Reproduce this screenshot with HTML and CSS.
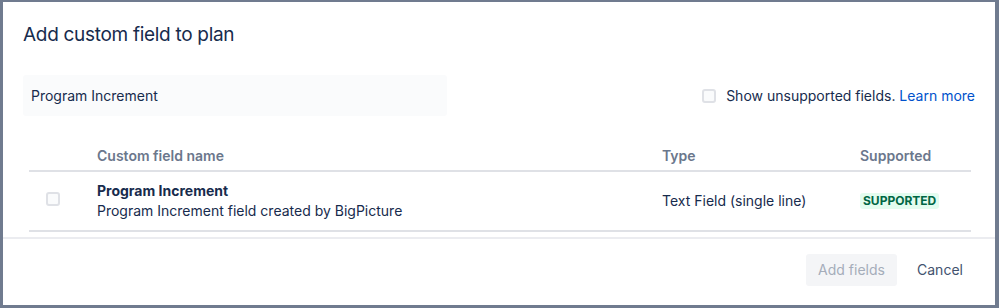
FILE: index.html
```html
<!DOCTYPE html>
<html>
<head>
<meta charset="utf-8">
<link rel="stylesheet" href="styles.css">
</head>
<body>
<div class="dialog">
  <div class="dialog-header">
    <h1 class="title">Add custom field to plan</h1>
  </div>
  <div class="dialog-body">
    <div class="controls">
      <div class="search">Program Increment</div>
      <label class="toggle">
        <span class="checkbox"></span>
        <span class="toggle-text">Show unsupported fields. <a class="link">Learn more</a></span>
      </label>
    </div>
    <div class="table">
      <div class="thead">
        <div class="cell"></div>
        <div class="cell th">Custom field name</div>
        <div class="cell th">Type</div>
        <div class="cell th">Supported</div>
      </div>
      <div class="trow">
        <div class="cell cb-cell"><span class="checkbox"></span></div>
        <div class="cell name-cell">
          <div class="field-name">Program Increment</div>
          <div class="field-desc">Program Increment field created by BigPicture</div>
        </div>
        <div class="cell type-cell">Text Field (single line)</div>
        <div class="cell sup-cell"><span class="lozenge">Supported</span></div>
      </div>
    </div>
  </div>
  <div class="dialog-footer">
    <button class="btn btn-disabled">Add fields</button>
    <button class="btn btn-subtle">Cancel</button>
  </div>
</div>
</body>
</html>
```

FILE: styles.css
```css
* { box-sizing: border-box; }
html, body { margin: 0; padding: 0; }
body {
  background: #707b8f;
  font-family: Inter, "Noto Sans", sans-serif;
  color: #172b4d;
  width: 999px;
  height: 308px;
  overflow: hidden;
}
.dialog {
  margin: 2px 4px 0 3px;
  width: 992px;
  height: 303px;
  background: #fff;
  display: flex;
  flex-direction: column;
}
.dialog-header {
  padding: 21px 20px 0 20px;
}
.title {
  margin: 0;
  font-size: 19px;
  line-height: 24px;
  font-weight: 400;
  color: #172b4d;
  letter-spacing: -0.3px;
}
.dialog-body {
  padding: 0 20px;
  flex: 1;
  border-bottom: 2px solid #ebecf0;
}
.controls {
  display: flex;
  justify-content: space-between;
  align-items: center;
  margin-top: 28px;
}
.search {
  width: 424px;
  height: 41px;
  background: #fafbfc;
  border-radius: 3px;
  padding: 0 8px;
  display: flex;
  align-items: center;
  font-size: 14px;
  color: #172b4d;
}
.toggle {
  display: flex;
  align-items: center;
  gap: 10px;
  font-size: 14px;
  line-height: 20px;
}
.checkbox {
  display: inline-block;
  width: 14px;
  height: 14px;
  border: 2px solid #dfe1e6;
  border-radius: 3px;
  background: #fafbfc;
}
.link { color: #0052cc; text-decoration: none; }
.table {
  margin: 24px 4px 0 6px;
}
.thead, .trow {
  display: grid;
  grid-template-columns: 68px 565px 198px 111px;
  border-bottom: 2px solid #dfe1e6;
}
.thead .cell {
  padding: 6px 0 4px;
  font-size: 14px;
  line-height: 20px;
  font-weight: 600;
  color: #6b778c;
}
.trow .cell {
  padding: 9px 0;
  font-size: 14px;
  line-height: 20px;
  display: flex;
  align-items: center;
}
.trow .cb-cell {
  justify-content: flex-start;
  padding-left: 17px;
  padding-bottom: 13px;
}
.name-cell { flex-direction: column; align-items: flex-start !important; }
.field-name { font-weight: 700; }
.lozenge {
  display: inline-block;
  background: #e3fcef;
  color: #006644;
  font-size: 12px;
  font-weight: 700;
  line-height: 16px;
  padding: 0 3px;
  border-radius: 3px;
  text-transform: uppercase;
}
.dialog-footer {
  display: flex;
  justify-content: flex-end;
  gap: 8px;
  padding: 15px 20px 19px;
}
.btn {
  font-family: inherit;
  font-size: 14px;
  height: 32px;
  line-height: 32px;
  padding: 0 12px;
  border: none;
  border-radius: 3px;
  background: none;
}
.btn-disabled {
  background: #f4f5f7;
  color: #a5adba;
  width: 91px;
}
.btn-subtle {
  color: #42526e;
  width: 70px;
}
```
